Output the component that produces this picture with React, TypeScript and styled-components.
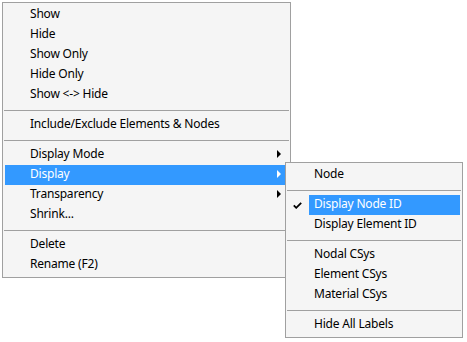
import React from 'react';
import styled, { createGlobalStyle } from 'styled-components';

const Global = createGlobalStyle`
  html, body { margin: 0; padding: 0; background: #ffffff; }
  body { font-family: "Noto Sans", "Segoe UI", sans-serif; font-size: 12px; color: #000; letter-spacing: -0.2px; }
`;

const Page = styled.div`
  position: relative;
  width: 467px;
  height: 342px;
  padding: 2px;
  box-sizing: border-box;
`;

const Menu = styled.div<{ $width: number }>`
  width: ${(p) => p.$width}px;
  box-sizing: border-box;
  border: 1px solid #a0a0a0;
  background: #f5f5f5;
  padding: 2px;
  display: flex;
  flex-direction: column;
`;

const SubMenuLayer = styled.div`
  position: absolute;
  left: 285px;
  top: 162px;
`;

const Item = styled.div<{ $active?: boolean }>`
  height: 20px;
  display: flex;
  align-items: center;
  padding-left: 25px;
  padding-right: 7px;
  background: ${(p) => (p.$active ? '#3399ff' : 'transparent')};
  color: ${(p) => (p.$active ? '#ffffff' : '#000000')};
  white-space: nowrap;
`;

const Label = styled.span`
  flex: 1;
  line-height: 18px;
  padding-bottom: 2px;
`;

const Arrow = styled.svg`
  width: 4px;
  height: 8px;
  margin-bottom: 3px;
  flex: none;
`;

const Separator = styled.div`
  height: 1px;
  margin: 5px -1px 4px;
  background: #a0a0a0;
`;

const SubItem = styled.div`
  height: 20px;
  display: flex;
  white-space: nowrap;
`;

const CheckCell = styled.div`
  width: 21px;
  flex: none;
  display: flex;
  align-items: center;
  padding-left: 5px;
  box-sizing: border-box;
`;

const SubLabel = styled.div<{ $active?: boolean }>`
  flex: 1;
  padding-left: 5px;
  line-height: 18px;
  padding-bottom: 2px;
  background: ${(p) => (p.$active ? '#3399ff' : 'transparent')};
  color: ${(p) => (p.$active ? '#ffffff' : '#000000')};
`;

const SubArrow = ({ color }: { color: string }) => (
  <Arrow viewBox="0 0 4 8">
    <polygon points="0,0 4,4 0,8" fill={color} />
  </Arrow>
);

const Check = () => (
  <svg width="9" height="7" viewBox="0 0 9 7">
    <path d="M0.8 3.4 L3.2 5.8 L8.2 0.8" fill="none" stroke="#000" strokeWidth="1.8" />
  </svg>
);

type Entry = { label: string; sub?: boolean; active?: boolean } | 'sep';

const mainEntries: Entry[] = [
  { label: 'Show' },
  { label: 'Hide' },
  { label: 'Show Only' },
  { label: 'Hide Only' },
  { label: 'Show <-> Hide' },
  'sep',
  { label: 'Include/Exclude Elements & Nodes' },
  'sep',
  { label: 'Display Mode', sub: true },
  { label: 'Display', sub: true, active: true },
  { label: 'Transparency', sub: true },
  { label: 'Shrink...' },
  'sep',
  { label: 'Delete' },
  { label: 'Rename (F2)' },
];

type SubEntry = { label: string; checked?: boolean; active?: boolean } | 'sep';

const subEntries: SubEntry[] = [
  { label: 'Node' },
  'sep',
  { label: 'Display Node ID', checked: true, active: true },
  { label: 'Display Element ID' },
  'sep',
  { label: 'Nodal CSys' },
  { label: 'Element CSys' },
  { label: 'Material CSys' },
  'sep',
  { label: 'Hide All Labels' },
];

export default function App() {
  return (
    <Page>
      <Global />
      <Menu $width={289}>
        {mainEntries.map((e, i) =>
          e === 'sep' ? (
            <Separator key={i} />
          ) : (
            <Item key={i} $active={e.active}>
              <Label>{e.label}</Label>
              {e.sub && <SubArrow color={e.active ? '#ffffff' : '#000000'} />}
            </Item>
          )
        )}
      </Menu>
      <SubMenuLayer>
        <Menu $width={178}>
          {subEntries.map((e, i) =>
            e === 'sep' ? (
              <Separator key={i} />
            ) : (
              <SubItem key={i}>
                <CheckCell>{e.checked && <Check />}</CheckCell>
                <SubLabel $active={e.active}>{e.label}</SubLabel>
              </SubItem>
            )
          )}
        </Menu>
      </SubMenuLayer>
    </Page>
  );
}
